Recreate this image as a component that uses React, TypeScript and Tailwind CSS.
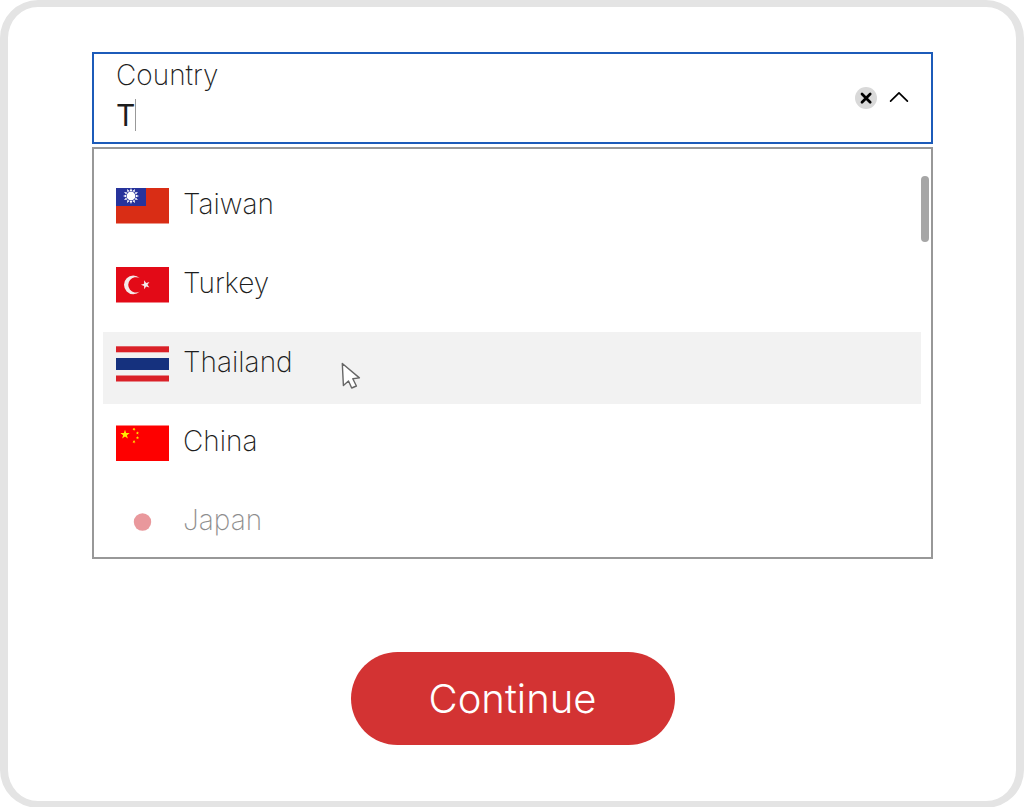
import React, { useState } from 'react';

type Country = {
  name: string;
  flag: React.ReactNode;
  faded?: boolean;
};

const star = (cx: number, cy: number, r: number, turn = -90) =>
  Array.from({ length: 10 }, (_, i) => {
    const radius = i % 2 === 0 ? r : r * 0.4;
    const a = ((turn + i * 36) * Math.PI) / 180;
    return `${cx + radius * Math.cos(a)},${cy + radius * Math.sin(a)}`;
  }).join(' ');

const rays = (cx: number, cy: number) =>
  Array.from({ length: 12 }, (_, i) => {
    const a = (i * Math.PI) / 6;
    const at = (r: number, t: number) => `${cx + r * Math.cos(t)} ${cy + r * Math.sin(t)}`;
    return `M${at(5.1, a - 0.24)}L${at(8, a)}L${at(5.1, a + 0.24)}Z`;
  }).join('');

const Flag = ({ children }: { children: React.ReactNode }) => (
  <svg viewBox="0 0 53 36" className="w-[53px] h-9 shrink-0" aria-hidden="true">
    {children}
  </svg>
);

const countries: Country[] = [
  {
    name: 'Taiwan',
    flag: (
      <Flag>
        <rect width="53" height="35.5" fill="#d92d15" />
        <rect width="30" height="18" fill="#27339b" />
        <path d={rays(15, 8)} fill="#fff" />
        <circle cx="15" cy="8" r="4.4" fill="#fff" />
      </Flag>
    ),
  },
  {
    name: 'Turkey',
    flag: (
      <Flag>
        <rect width="53" height="35.5" fill="#e30a17" />
        <path d="M23.8 11.2A9.3 9.3 0 1 0 23.8 24.5A7.7 7.7 0 1 1 23.8 11.2Z" fill="#f4e9e9" />
        <polygon points={star(29.6, 17.8, 4.7, 180)} fill="#f4e9e9" />
      </Flag>
    ),
  },
  {
    name: 'Thailand',
    flag: (
      <Flag>
        <rect y="0.3" width="53" height="6" fill="#da2128" />
        <rect y="12" width="53" height="12" fill="#15317e" />
        <rect y="29.5" width="53" height="6" fill="#da2128" />
      </Flag>
    ),
  },
  {
    name: 'China',
    flag: (
      <Flag>
        <rect y="0.5" width="53" height="35.5" fill="#fe0000" />
        <g fill="#ffee00">
          <polygon points={star(9, 9.6, 4.9)} />
          <polygon points={star(18, 4.3, 1.7, -60)} />
          <polygon points={star(21.5, 8, 1.7, -80)} />
          <polygon points={star(21.5, 12.8, 1.7)} />
          <polygon points={star(18, 16.8, 1.7, -60)} />
        </g>
      </Flag>
    ),
  },
  {
    name: 'Japan',
    faded: true,
    flag: (
      <Flag>
        <circle cx="26.5" cy="18" r="8.7" fill="#d4343b" />
      </Flag>
    ),
  },
];

const Pointer = () => (
  <svg
    viewBox="0 0 20 28"
    className="absolute left-[238px] top-[30px] w-5 h-7 pointer-events-none"
    aria-hidden="true"
  >
    <path
      d="M1.3 1.5L18.4 15.9L11.8 16.7L15.4 24L10.7 26L7.5 19L2.4 23.5Z"
      fill="#fff"
      stroke="#666"
      strokeWidth="1.4"
      strokeLinejoin="round"
    />
  </svg>
);

const App = () => {
  const [query, setQuery] = useState('T');
  const [active, setActive] = useState('Thailand');
  const [open, setOpen] = useState(true);

  return (
    <div className="bg-white">
      <main className="min-h-screen border-x-8 border-y-[7px] border-[#e4e4e4] rounded-[38px] bg-white pl-[84px] pr-[83px] pt-[45px] pb-14 flex flex-col font-['Inter',sans-serif] font-extralight text-[#1d1d1d]">
        <div className="flex items-center justify-between h-[92px] border-2 border-[#1c5bb9] px-[22px]">
          <div className="flex flex-col pb-1.5">
            <label htmlFor="country" className="text-[28px] leading-10">
              Country
            </label>
            <div className="flex items-center h-10">
              <input
                id="country"
                type="text"
                role="combobox"
                aria-expanded={open}
                aria-controls="country-list"
                autoComplete="off"
                value={query}
                onChange={(e) => setQuery(e.target.value)}
                className="field-sizing-content min-w-px text-[30px] leading-10 font-normal caret-transparent outline-none"
              />
              <span className="w-px h-8 bg-[#999]" />
            </div>
          </div>
          <div className="flex items-center gap-3">
            <button type="button" aria-label="Clear" onClick={() => setQuery('')}>
              <svg viewBox="0 0 24 24" className="w-6 h-6">
                <circle cx="13" cy="12" r="11" fill="#d9d9d9" />
                <path d="M9 8L17.2 16.2M17.2 8L9 16.2" stroke="#000" strokeWidth="2.7" strokeLinecap="round" />
              </svg>
            </button>
            <button type="button" aria-label="Toggle list" onClick={() => setOpen(!open)}>
              <svg viewBox="0 0 20 24" className="w-5 h-6">
                <path
                  d="M1.6 15.2L10 6.8L18.4 15.2"
                  fill="none"
                  stroke="#000"
                  strokeWidth="1.7"
                  strokeLinecap="round"
                  strokeLinejoin="round"
                />
              </svg>
            </button>
          </div>
        </div>

        {open && (
          <div className="flex mt-[3px] h-[412px] overflow-hidden border-2 border-[#989898] pt-[25px] pl-[9px] pr-0.5">
            <ul id="country-list" role="listbox" aria-label="Country" className="flex-1 flex flex-col gap-[7px]">
              {countries.map((c) => (
                <li
                  key={c.name}
                  role="option"
                  aria-selected={active === c.name}
                  onMouseEnter={() => setActive(c.name)}
                  className={`relative flex shrink-0 items-center gap-[14px] h-[72px] pl-[13px] pb-2 ${
                    active === c.name ? 'bg-[#f2f2f2]' : ''
                  } ${c.faded ? 'opacity-50' : ''}`}
                >
                  {c.flag}
                  <span className="text-[28px] leading-8 pb-1">{c.name}</span>
                  {active === c.name && <Pointer />}
                </li>
              ))}
            </ul>
            <div className="w-2 h-[66px] mt-0.5 rounded-full bg-[#a6a6a6]" />
          </div>
        )}

        <button
          type="button"
          className="self-center mt-[93px] h-[93px] w-[324px] rounded-full bg-[#d33333] text-white text-[40px] font-light"
        >
          Continue
        </button>
      </main>
    </div>
  );
};

export default App;
